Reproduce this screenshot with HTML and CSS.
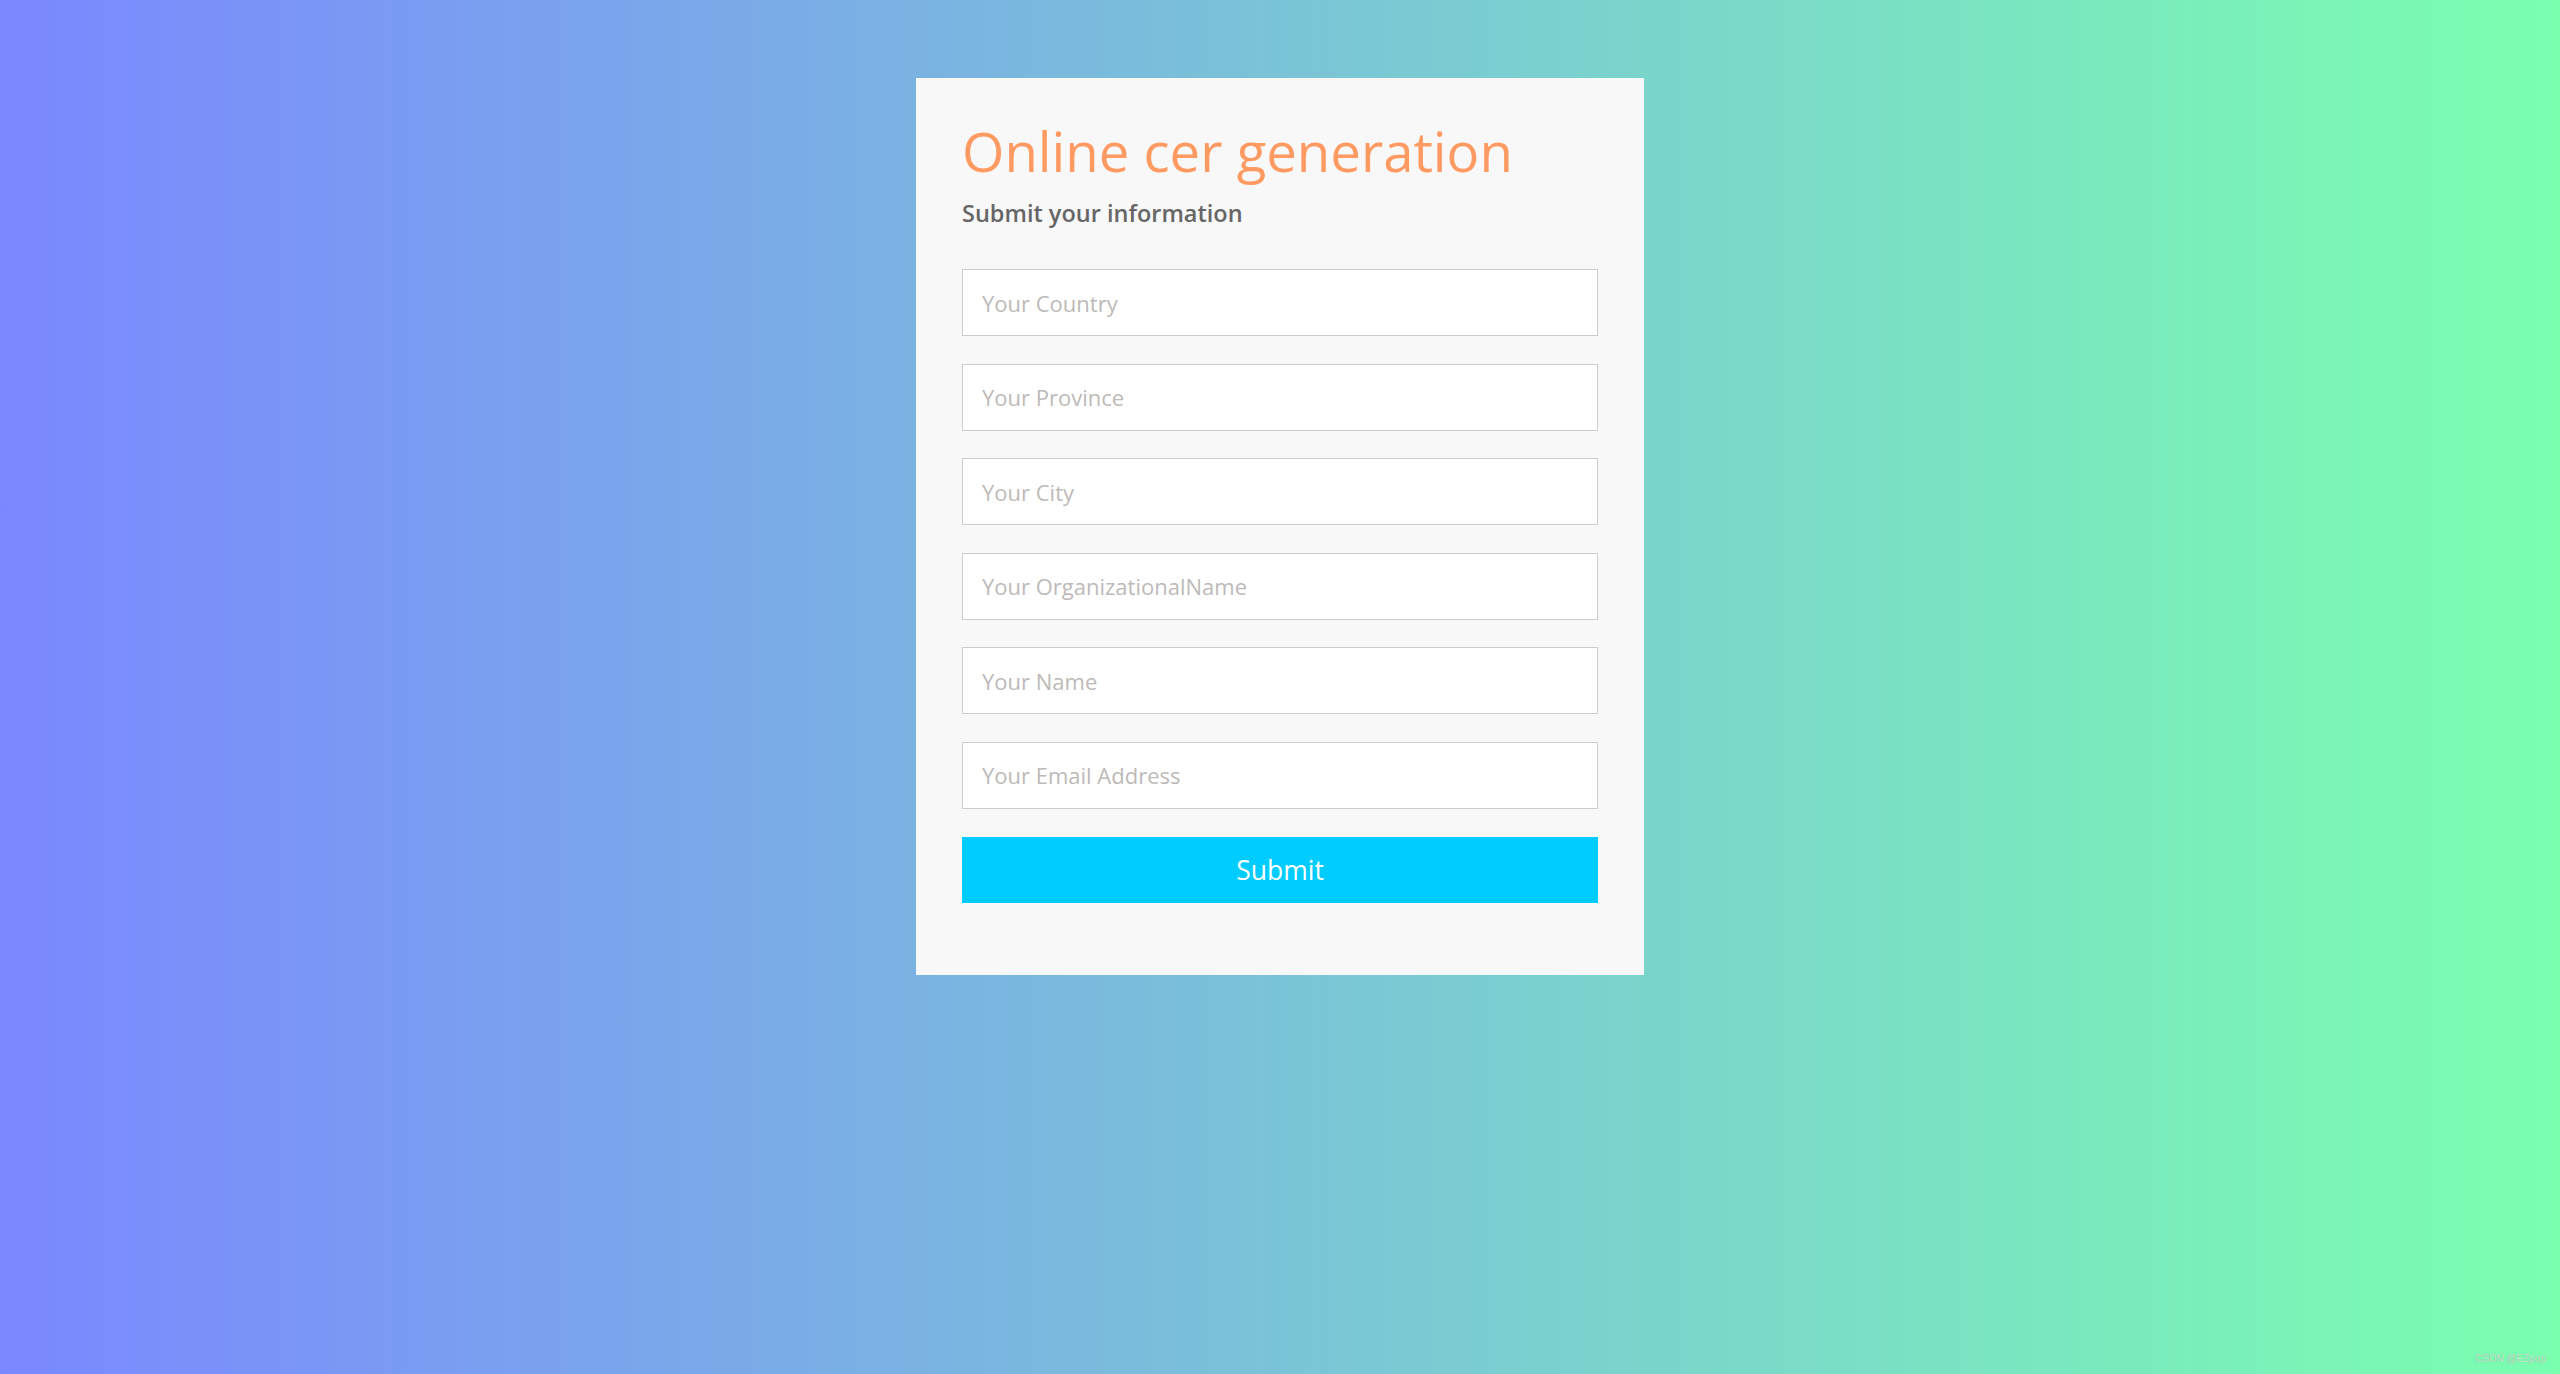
FILE: index.html
```html
<!DOCTYPE html>
<html>
<head>
    <title>Online cer generation</title>
    <link rel="stylesheet" href="styles.css">
</head>

<body>
    <form id="CertForm" class="cert-form">
        <h1 class="form-title">Online cer generation</h1>
        <h3 class="form-subtitle">Submit your information</h3>

        <input type="text" name="country" placeholder="Your Country">
        <input type="text" name="province" placeholder="Your Province">
        <input type="text" name="city" placeholder="Your City">
        <input type="text" name="organization" placeholder="Your OrganizationalName">
        <input type="text" name="name" placeholder="Your Name">
        <input type="email" name="email" placeholder="Your Email Address">
        <button type="button">Submit</button>
    </form>

    <div class="watermark">CSDN @EZpop</div>
</body>
</html>
```

FILE: styles.css
```css
html, body {
    height: 100%;
}
body {
    margin: 0;
    background: linear-gradient(to right, #7a88ff, #7affaf);
    font-family: "Open Sans", "Liberation Sans", sans-serif;
    display: flex;
    justify-content: center;
    align-items: flex-start;
}
.cert-form {
    width: 728px;
    box-sizing: border-box;
    margin-top: 78px;
    padding: 35px 46px 72px;
    background-color: #f8f8f8;
    display: flex;
    flex-direction: column;
}
.form-title {
    margin: 0;
    font-size: 54.5px;
    font-weight: 400;
    line-height: 76px;
    color: #ff9a62;
}
.form-subtitle {
    margin: 8px 0 39px;
    font-size: 23.5px;
    font-weight: 600;
    line-height: 33px;
    color: #666666;
}
.cert-form input {
    height: 67px;
    box-sizing: border-box;
    margin: 0 0 27.6px;
    padding: 0 19px;
    border: 1px solid #cccccc;
    background: #fff;
    font-family: inherit;
    font-size: 22px;
    color: #555;
    outline: none;
}
.cert-form input::placeholder {
    color: #bdbab8;
}
.cert-form button {
    height: 66px;
    border: none;
    background-color: #00ccff;
    color: #fff;
    font-family: inherit;
    font-size: 26.5px;
    cursor: pointer;
}
.watermark {
    position: absolute;
    right: 14px;
    bottom: 10px;
    font-family: "Liberation Sans", sans-serif;
    font-size: 10px;
    color: #c8f0d6;
    text-shadow: 0 0 1px #6a9a7c;
}
```
